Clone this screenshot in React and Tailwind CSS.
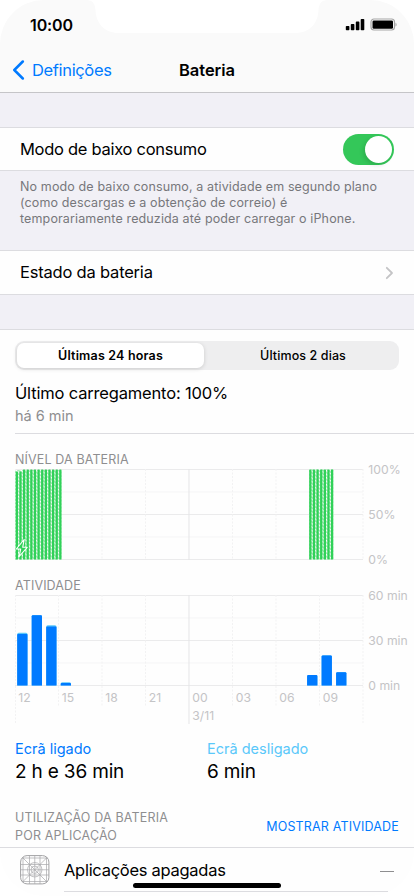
import React from 'react';

const GRID_X = [15.5, 58.5, 102, 145.5, 189, 232.5, 276, 319.5, 363];
const HOURS = ['12', '15', '18', '21', '00', '03', '06', '09'];
const LEVEL_START = Array.from({ length: 13 }, (_, i) => 15.7 + i * 3.625);
const LEVEL_END = Array.from({ length: 7 }, (_, i) => 309.2 + i * 3.625);

// x, screen-on height, screen-off height (px above the baseline)
const ACTIVITY = [
  [17.2, 51.5, 1.2],
  [31.7, 70.3, 0.3],
  [46.2, 59, 1.3],
  [60.7, 2.5, 0.8],
  [307.1, 10.5, 0],
  [321.6, 30, 0.2],
  [336.1, 13.3, 0.2],
];

function Grid() {
  return (
    <g>
      {[0.5, 23, 45.5, 68, 90.5].map((y) => (
        <line key={y} x1="15" x2="363" y1={y} y2={y} stroke={y % 1 ? '#ebebec' : '#f5f5f6'} />
      ))}
    </g>
  );
}

function StatusBar() {
  return (
    <div className="relative flex h-[48px] items-start justify-between pt-[15px] pr-[17px] pl-[30px]">
      <svg className="absolute top-0 left-0" width="414" height="48" viewBox="0 0 414 48" fill="none">
        <path
          d="M86 0C93 0 95 4 95.500 10C96 23 104 33 119 33H295C310 33 318 23 318.500 10C319 4 321 0 328 0Z"
          fill="#fff"
        />
      </svg>
      <span className="relative text-[16px] leading-5 font-semibold tracking-[-0.1px]">10:00</span>
      <svg className="relative mt-[3px]" width="52" height="13" viewBox="0 0 52 13">
        <rect x="0.800" y="8" width="3.600" height="4.300" rx="0.800" />
        <rect x="5.800" y="6" width="3.600" height="6.300" rx="0.800" />
        <rect x="10.800" y="3.600" width="3.600" height="8.700" rx="0.800" />
        <rect x="15.700" y="1" width="3.600" height="11.300" rx="0.800" />
        <rect x="26" y="1" width="23.500" height="11" rx="3" fill="#fff" stroke="#a5a5a5" strokeWidth="1.200" />
        <rect x="27.500" y="2.400" width="20.500" height="8.300" rx="1.300" />
        <path d="M50.500 4.700C52 5.300 52 7.900 50.500 8.500Z" fill="#a5a5a5" />
      </svg>
    </div>
  );
}

function NavBar() {
  return (
    <div className="grid h-[44px] grid-cols-3 items-center">
      <div className="flex items-center pl-[12px] text-[#007aff]">
        <svg width="13" height="20" viewBox="0 0 13 20" fill="none">
          <path d="M10.800 1.500L2.300 10L10.800 18.500" stroke="currentColor" strokeWidth="2.500" strokeLinecap="round" strokeLinejoin="round" />
        </svg>
        <span className="ml-[7px] text-[16.500px] tracking-[-0.35px]">Definições</span>
      </div>
      <h1 className="text-center text-[16.500px] font-semibold tracking-[-0.05px]">Bateria</h1>
    </div>
  );
}

function LevelChart() {
  return (
    <svg className="block overflow-visible" width="414" height="92" viewBox="0 0 414 92">
      <defs>
        <pattern id="charging" width="3" height="3.500" patternUnits="userSpaceOnUse" patternTransform="skewY(35)">
          <rect width="3" height="3.500" fill="#a9e9ba" />
          <rect width="3" height="1.400" fill="#fff" />
        </pattern>
      </defs>
      <Grid />
      {GRID_X.map((x) => (
        <line key={x} x1={x} x2={x} y1="0" y2="91" stroke={x === 189 ? '#e5e5e7' : '#f2f2f3'} strokeDasharray={x === 189 ? undefined : '2 1.5'} />
      ))}
      <rect x="15" y="1" width="46.500" height="89.500" fill="url(#charging)" />
      <rect x="309" y="0.500" width="24.300" height="90" fill="url(#charging)" />
      {LEVEL_START.map((x, i) => (
        <rect key={x} x={x} y={i < 2 ? 2.5 : 0.5} width="2.300" height={i < 2 ? 88 : 90} rx="0.500" fill="#30d158" />
      ))}
      {LEVEL_END.map((x) => (
        <rect key={x} x={x} y="0.500" width="2.300" height="90" rx="0.500" fill="#30d158" />
      ))}
      <path
        d="M24.200 70.500L16.300 80H20.700L19.200 87.500L27.200 78.300H22.700Z"
        fill="#30d158"
        stroke="#fff"
        strokeWidth="1.100"
        strokeLinejoin="round"
      />
      <g fill="#c4c4c6" fontSize="12.200">
        <text x="368.300" y="5">100%</text>
        <text x="368.300" y="50">50%</text>
        <text x="368.300" y="95">0%</text>
      </g>
    </svg>
  );
}

function ActivityChart() {
  return (
    <svg className="block overflow-visible" width="414" height="130" viewBox="0 0 414 130">
      <Grid />
      {GRID_X.map((x, i) => (
        <line key={x} x1={x} x2={x} y1="0" y2={i % 4 ? 112 : 129} stroke={x === 189 ? '#e5e5e7' : '#f2f2f3'} strokeDasharray={x === 189 ? undefined : '2 1.5'} />
      ))}
      {ACTIVITY.map(([x, on, off]) => (
        <g key={x}>
          <path
            d={`M${x} 90.500V${90.5 - on - off + 1.5}q0 -1.500 1.500 -1.500h7.300q1.500 0 1.500 1.500V90.500Z`}
            fill="#5ac8fa"
          />
          <path
            d={`M${x} 90.500V${90.5 - on + 1}q0 -1 1 -1h8.300q1 0 1 1V90.500Z`}
            fill="#007aff"
          />
        </g>
      ))}
      <g fill="#c4c4c6" fontSize="12.200">
        {HOURS.map((h, i) => (
          <text key={h} x={18.3 + i * 43.5} y="107">{h}</text>
        ))}
        <text x="192.300" y="125">3/11</text>
        <text x="368.300" y="5">60 min</text>
        <text x="368.300" y="50">30 min</text>
        <text x="368.300" y="95">0 min</text>
      </g>
    </svg>
  );
}

function AppGridIcon() {
  return (
    <svg width="30" height="30" viewBox="0 0 30 30" fill="none" stroke="#a8a8aa" strokeWidth="0.700">
      <rect x="0.600" y="0.600" width="28.300" height="28.300" rx="6.500" stroke="#a2a2a4" strokeWidth="1" />
      <path d="M3 2V27.500M9.500 0.600V28.900M14.750 0.600V28.900M20 0.600V28.900M26.500 2V27.500" />
      <path d="M2 3H27.500M0.600 9.500H28.900M0.600 14.750H28.900M0.600 20H28.900M2 26.500H27.500" />
      <path d="M2.500 2.500L27 27M27 2.500L2.500 27" />
      <circle cx="14.750" cy="14.750" r="7.200" />
      <circle cx="14.750" cy="14.750" r="3.700" />
    </svg>
  );
}

function App() {
  return (
    <div className="relative h-[896px] w-[414px] overflow-hidden bg-white font-['Inter','Liberation_Sans',sans-serif] text-black">
      <div className="flex h-full flex-col overflow-hidden rounded-[44px] bg-[#fefefe]">
        <header className="h-[93px] shrink-0 border-b border-[#c5c5c8] bg-[#fafafa]">
          <StatusBar />
          <NavBar />
        </header>

        <section className="shrink-0 bg-[#f1f0f6] pt-[34px]">
          <div className="flex h-[44px] items-center justify-between border-y border-[#dcdce0] bg-[#fefefe] pr-[20px] pl-[20px]">
            <span className="text-[16.500px] tracking-[-0.28px]">Modo de baixo consumo</span>
            <div className="flex h-[31px] w-[51px] items-center justify-end rounded-full bg-[#34c759] pr-[2px]">
              <div className="size-[27px] rounded-full bg-white shadow-[-2px_2px_4px_rgba(0,0,0,0.12)]" />
            </div>
          </div>
          <p className="h-[79px] pt-[8px] pl-[20px] text-[12.500px] leading-[16px] tracking-[0.13px] whitespace-nowrap text-[#77777b]">
            No modo de baixo consumo, a atividade em segundo plano
            <br />
            (como descargas e a obtenção de correio) é
            <br />
            temporariamente reduzida até poder carregar o iPhone.
          </p>
          <div className="flex h-[45px] items-center justify-between border-y border-[#dcdce0] bg-[#fefefe] pr-[20px] pl-[20px]">
            <span className="text-[16.500px] tracking-[-0.2px]">Estado da bateria</span>
            <svg width="9" height="14" viewBox="0 0 9 14" fill="none">
              <path d="M1.800 1.800L7 7L1.800 12.200" stroke="#c4c4c6" strokeWidth="1.800" strokeLinecap="round" strokeLinejoin="round" />
            </svg>
          </div>
          <div className="h-[35px] border-b border-[#dcdce0]" />
        </section>

        <section className="flex shrink-0 flex-col">
          <div className="mx-[15px] mt-[11px] grid h-[29px] grid-cols-[187px_1fr] rounded-[9px] bg-[#eeeeef] p-[2px] text-[12.500px]">
            <div className="flex items-center justify-center rounded-[7px] bg-white pt-px font-semibold tracking-[0.18px] shadow-[0_1px_4px_rgba(0,0,0,0.15)]">
              Últimas 24 horas
            </div>
            <div className="flex items-center justify-center pt-px pl-[5px] font-medium tracking-[0.1px]">Últimos 2 dias</div>
          </div>

          <div className="ml-[15px] h-[64px] border-b border-[#dcdce0] pt-[12px]">
            <div className="text-[16.500px] leading-[22px] tracking-[-0.17px]">Último carregamento: 100%</div>
            <div className="mt-[2px] text-[14.500px] leading-5 text-[#8e8e90]">há 6 min</div>
          </div>

          <h2 className="mt-[17px] ml-[15px] h-[18px] text-[12.500px] leading-[18px] tracking-[0.13px] text-[#8e8e90]">NÍVEL DA BATERIA</h2>
          <LevelChart />
          <h2 className="mt-[16px] ml-[15px] h-[18px] text-[12.500px] leading-[18px] tracking-[0.13px] text-[#8e8e90]">ATIVIDADE</h2>
          <ActivityChart />

          <div className="mt-[14px] ml-[15px] grid grid-cols-2">
            <div>
              <div className="text-[14.500px] leading-5 text-[#007aff]">Ecrã ligado</div>
              <div className="mt-px text-[19px] leading-6 tracking-[-0.18px]">2 h e 36 min</div>
            </div>
            <div className="-ml-[7.500px]">
              <div className="text-[14.500px] leading-5 text-[#5ac8fa]">Ecrã desligado</div>
              <div className="mt-px text-[19px] leading-6 tracking-[-0.18px]">6 min</div>
            </div>
          </div>

          <div className="mt-[25px] flex h-[38px] justify-between pr-[15px] pl-[15px] text-[12.500px] leading-[18px] tracking-[0.17px]">
            <h2 className="text-[#8e8e90]">
              UTILIZAÇÃO DA BATERIA
              <br />
              POR APLICAÇÃO
            </h2>
            <button className="mt-[9px] h-[18px] tracking-[0.17px] text-[#007aff]">MOSTRAR ATIVIDADE</button>
          </div>

          <div className="flex h-[48px] items-start border-t border-[#dcdce0] pt-[7px] pl-[20px]">
            <AppGridIcon />
            <div className="ml-[14px] flex h-[37px] w-[324px] items-start justify-between border-b border-[#dcdce0] pt-[4px]">
              <span className="text-[16.500px] leading-[22px] tracking-[-0.28px]">Aplicações apagadas</span>
              <span className="mt-[12px] mr-[-6px] h-px w-[14px] bg-[#8e8e90]" />
            </div>
          </div>
        </section>
      </div>

      {/* Home indicator */}
      <div className="absolute bottom-[8px] left-[133px] h-[5px] w-[148px] rounded-full bg-black" />
    </div>
  );
}

export default App;
